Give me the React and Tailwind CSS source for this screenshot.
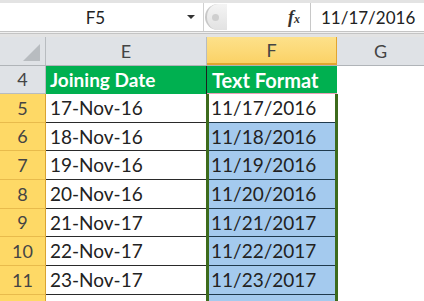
import React from 'react';

const rows = [
  { n: 5, e: '17-Nov-16', f: '11/17/2016', h: 'h-[29px]' },
  { n: 6, e: '18-Nov-16', f: '11/18/2016', h: 'h-[28px]' },
  { n: 7, e: '19-Nov-16', f: '11/19/2016', h: 'h-[29px]' },
  { n: 8, e: '20-Nov-16', f: '11/20/2016', h: 'h-[29px]' },
  { n: 9, e: '21-Nov-17', f: '11/21/2017', h: 'h-[28px]' },
  { n: 10, e: '22-Nov-17', f: '11/22/2017', h: 'h-[29px]' },
  { n: 11, e: '23-Nov-17', f: '11/23/2017', h: 'h-[29px]' },
];

const font = { fontFamily: 'Lato, "Open Sans", sans-serif' };

export default function App() {
  return (
    <div className="w-[424px] h-[301px] overflow-hidden bg-white text-[#222]" style={font}>
      {/* formula bar */}
      <div className="h-[3px] bg-[#e3e3e3]" />
      <div className="flex h-[28px] bg-white">
        <div className="relative flex w-[204px] items-center justify-center border-r border-[#d0d0d0] pr-[12px]">
          <span className="text-[17px] leading-none">F5</span>
          <span className="absolute right-[8px] top-[12px] h-0 w-0 border-x-[4px] border-t-[4px] border-x-transparent border-t-[#333]" />
        </div>
        <div className="flex w-[106px] items-center bg-white">
          <div className="ml-[1px] flex h-[26px] w-[22px] items-center rounded-l-full border-l-2 border-[#c8c8c8] bg-gradient-to-b from-[#f4f4f4] to-[#e2e2e2] pl-[5px]">
            <span className="h-[7px] w-[7px] rounded-full bg-[#cfcfcf]" />
          </div>
          <div className="flex-1" />
          <span className="mr-[10px] text-[18px] italic font-bold leading-none text-[#333]" style={{ fontFamily: '"Liberation Serif", serif' }}>
            f<span className="text-[12px]">x</span>
          </span>
        </div>
        <div className="flex flex-1 items-center border-l border-[#c8c8c8] pl-[10px]">
          <span className="text-[17px] leading-none">11/17/2016</span>
        </div>
      </div>
      <div className="h-[3px] border-y border-[#c4c4c4] bg-[#f0f0f0]" />
      <div className="h-[3px] bg-[#e3e3e3]" />

      {/* column headers */}
      <div className="flex h-[29px] border-b border-[#b0b4b8]">
        <div className="relative w-[46px] border-r border-[#b8bcc0] bg-[#dfe2e6]">
          <span className="absolute bottom-[4px] right-[5px] h-0 w-0 border-b-[17px] border-l-[17px] border-b-[#b8bcc0] border-l-transparent" />
        </div>
        <div className="flex w-[161px] items-center justify-center border-r border-[#b8bcc0] bg-[#dfe2e6] text-[18px] text-[#444]">E</div>
        <div className="flex w-[130px] items-center justify-center border-b-2 border-r border-b-[#e2a530] border-r-[#e2a530] bg-gradient-to-b from-[#fde18a] to-[#fbd266] text-[18px] text-[#444]">F</div>
        <div className="flex flex-1 items-center justify-center bg-[#dfe2e6] text-[18px] text-[#444]">G</div>
      </div>

      {/* row 4 */}
      <div className="flex h-[28px]">
        <div className="flex w-[46px] items-center justify-center border-b border-r border-[#b8bcc0] bg-[#dfe2e6] text-[18px] text-[#444]">4</div>
        <div className="flex w-[161px] items-center border-r border-[#1f1f1f] bg-[#00b050] pl-[4px] text-[19px] font-bold text-white">Joining Date</div>
        <div className="flex w-[130px] items-center border-b border-[#e8a0b8] bg-[#00b050] pl-[5px] text-[20px] font-bold text-white">Text Format</div>
        <div className="flex-1 bg-white" />
      </div>

      {/* data rows */}
      {rows.map((r, i) => (
        <div key={r.n} className={`flex ${r.h}`}>
          <div className="flex w-[46px] items-center justify-center border-b border-r border-b-[#e8bb4c] border-r-[#d9a332] bg-[#fed966] text-[18px] text-[#444]">{r.n}</div>
          <div className="flex w-[160px] items-center border-b border-[#2a2a2a] bg-white pl-[4px] pt-[1px] text-[19px]">{r.e}</div>
          <div className="w-[3px] bg-[#3d6b1c]" />
          <div className={`flex w-[126px] items-center border-b border-[#1f3a4d] pl-[2px] pt-[1px] text-[19px] ${i === 0 ? 'bg-white' : 'bg-[#a4caee]'}`}>{r.f}</div>
          <div className="w-[3px] bg-[#3d6b1c]" />
          <div className="flex-1 bg-white" />
        </div>
      ))}
      <div className="flex h-[6px]">
        <div className="w-[46px] border-r border-[#d9a332] bg-[#fed966]" />
        <div className="w-[160px] bg-white" />
        <div className="w-[3px] bg-[#3d6b1c]" />
        <div className="w-[126px] bg-[#a4caee]" />
        <div className="w-[3px] bg-[#3d6b1c]" />
        <div className="flex-1 bg-white" />
      </div>
    </div>
  );
}
